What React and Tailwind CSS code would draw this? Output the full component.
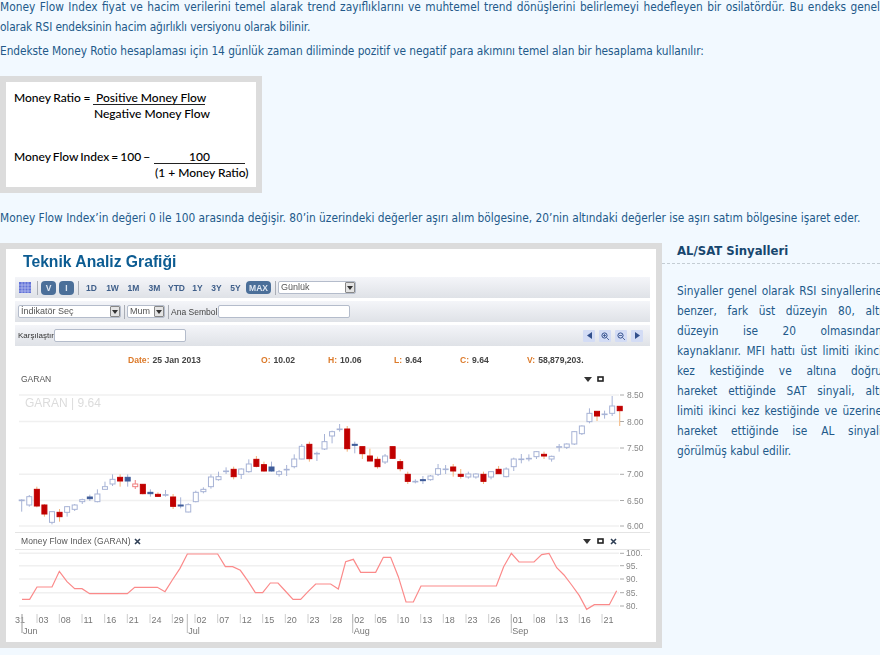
import React from "react";

const C = [
["w",298,300,302,335],["w",285,290,315,320],["r",260,268,318,322],["r",312,315,342,350],["w",335,335,367,373],["r",327,337,350,365],["w",318,320,337,350],["w",312,315,328,333],["w",296,299,305,312],["b",284,291,296,303],["w",268,282,305,307],["w",245,260,268,268],["w",223,238,252,258],["r",223,232,243,260],["b",223,232,243,260],["p",240,252,260,267],["r",253,253,281,283],["b",268,277,281,290],["r",277,283,289,290],["w",270,284,285,290],["r",282,291,319,327],["b",292,315,318,325],["w",310,314,336,337],["w",272,277,305,307],["w",262,268,275,280],["w",223,231,260,266],["w",215,230,239,242],["w",202,213,214,222],["r",200,208,230,238],["w",205,207,223,237],["w",178,192,215,218],["r",168,178,199,202],["r",185,194,213,215],["b",185,201,213,215],["w",210,215,223,230],["w",195,208,209,228],["w",163,177,200,205],["w",132,139,177,178],["r",125,133,176,185],["w",155,160,161,183],["w",102,125,147,150],["w",92,95,108,130],["w",72,87,88,95],
];
const C2 = [
["r",108,117,176,185],["b",155,163,166,190],["r",170,170,191,207],["r",176,198,213,213],["r",200,208,230,236],["w",192,198,216,222],["r",170,170,205,207],["r",207,215,236,244],["r",245,253,274,282],["w",268,274,275,280],["b",258,269,272,282],["w",255,258,269,272],["w",222,236,253,258],["w",225,237,238,252],["r",222,231,243,260],["r",237,253,259,266],["w",245,252,261,266],["w",250,252,261,266],["r",245,253,274,282],["w",243,245,261,268],["r",228,238,251,252],["w",232,237,260,262],["w",203,207,230,243],["w",192,207,208,220],["w",193,205,206,214],["w",183,185,200,207],["r",185,193,198,207],["w",197,199,207,215],["w",162,170,171,185],["w",160,162,172,177],["w",123,125,162,165],["w",106,108,131,135],["w",55,70,95,100],["r",64,64,78,93],["w",62,72,73,86],["w",18,48,70,78],["r",49,49,62,108],
];
const candles = [
  ...C.map((c) => [c[0], ...c.slice(1).map((v) => 400 + v / 3)]),
  ...C2.map((c) => [c[0], ...c.slice(1).map((v) => 390 + v / 3)]),
];
const STYLE = {
  w: { body: "#ffffff", stroke: "#a7b3d6", wick: "#a7b3d6" },
  r: { body: "#c00000", stroke: "#c00000", wick: "#f2b277" },
  b: { body: "#3f5c99", stroke: "#3f5c99", wick: "#a7b3d6" },
  p: { body: "#ffffff", stroke: "#f07f7f", wick: "#f07f7f" },
};

const mfiA = [[66,223],[89,223],[111,186],[133,186],[156,186],[178,139],[201,170],[224,191],[246,191],[269,206],[292,206],[314,206],[337,206],[359,206],[382,206],[404,187],[427,187],[450,187],[472,187],[495,200],[517,165],[540,130],[562,87],[585,87],[608,87],[630,87],[653,87],[676,125],[698,125],[721,136],[743,167],[766,203],[788,203],[811,174],[834,174],[856,198],[879,223],[902,223],[924,200],[947,177],[970,177],[992,177],[1015,192]];
const mfiB = [[47,110],[70,103],[92,142],[115,142],[137,142],[160,97],[182,97],[205,155],[228,231],[250,231],[273,183],[499,183],[521,125],[544,85],[567,111],[589,111],[612,111],[635,89],[657,85],[680,128],[702,150],[725,180],[748,212],[770,253],[793,239],[815,239],[838,239],[860,197]];
const mfi = [
  ...mfiA.map(([x, y]) => [x / 3, 525 + y / 3]),
  ...mfiB.map(([x, y]) => [330 + x / 3, 525 + y / 3]),
];

const ticks = [
  [37,"03"],[59.3,"08"],[82,"11"],[104.7,"16"],[127.3,"21"],[150,"24"],[172.3,"29"],[195,"02"],[217.7,"07"],[240.3,"12"],[262.7,"15"],[285.3,"20"],[308,"23"],[330.7,"28"],[352.7,"02"],[375.3,"05"],[398,"10"],[420.7,"13"],[443.3,"18"],[466,"23"],[488.7,"26"],[511.3,"01"],[534,"08"],[556.7,"13"],[579.3,"16"],[602,"21"],
];
const months = [[22,"Jun"],[187.3,"Jul"],[352.7,"Aug"],[511.3,"Sep"]];

const pLine = "block w-[880px] [text-align-last:justify]";
const sLine = "block w-[205px] [text-align-last:justify]";

function Select({ label, className }) {
  return (
    <div className={`flex h-[13px] items-center justify-between rounded-[2px] border border-[#b4bccb] bg-white pl-[2px] ${className}`}>
      <span className="text-[9px] leading-none text-[#555]">{label}</span>
      <span className="flex h-[11px] w-[10px] items-center justify-center rounded-[1px] border border-[#888] bg-[#e4e4e4]">
        <svg width="6" height="4" viewBox="0 0 6 4"><path d="M0 0h6L3 4z" fill="#333" /></svg>
      </span>
    </div>
  );
}
const Sep = ({ className = "" }) => <span className={`h-[14px] w-[1px] bg-[#a9adb5] ${className}`} />;
const Bar = ({ children, className = "" }) => (
  <div className={`flex h-[21px] items-center bg-gradient-to-b from-[#f4f5f9] to-[#dfe2e7] ${className}`}>{children}</div>
);
const Range = ({ children, className }) => (
  <span className={`text-center text-[8.5px] font-bold text-[#3f5f8a] ${className}`}>{children}</span>
);
const NavBtn = ({ children }) => (
  <span className="flex h-[12px] w-[12px] items-center justify-center rounded-[1px] bg-[#d3dcf5]">{children}</span>
);
const Tri = () => <svg width="8" height="5" viewBox="0 0 8 5"><path d="M0 0h8L4 5z" fill="#333" /></svg>;
const Box = () => <svg width="7" height="6" viewBox="0 0 7 6"><rect x="1" y="1" width="5" height="4" fill="none" stroke="#222" strokeWidth="1.6" /></svg>;
const Xm = () => <svg width="7" height="7" viewBox="0 0 7 7"><path d="M1 1l5 5M6 1L1 6" stroke="#2f3f55" strokeWidth="1.6" /></svg>;

const Stat = ({ k, v, className }) => (
  <span className={`absolute flex gap-[3px] ${className}`}>
    <span className="text-[#dc7a2a]">{k}</span>
    <span className="text-[#444]">{v}</span>
  </span>
);

export default function App() {
  return (
    <div
      className="h-[655px] w-[880px] overflow-hidden bg-[#f2f9ff] text-[11.8px] leading-[20px] text-[#22598a]"
      style={{ fontFamily: '"DejaVu Sans Condensed", "DejaVu Sans", sans-serif', fontStretch: "condensed" }}
    >
      <p className="-mt-[3px]">
        <span className={pLine}>Money Flow Index fiyat ve hacim verilerini temel alarak trend zayıflıklarını ve muhtemel trend dönüşlerini belirlemeyi hedefleyen bir osilatördür. Bu endeks genel</span>
        <span className="block tracking-[-0.14px]">olarak RSI endeksinin hacim ağırlıklı versiyonu olarak bilinir.</span>
      </p>
      <p className="mt-[4px] tracking-[-0.05px]">Endekste Money Rotio hesaplaması için 14 günlük zaman diliminde pozitif ve negatif para akımını temel alan bir hesaplama kullanılır:</p>

      <div className="mt-[15px] h-[117px] w-[262px] border-[6px] border-[#dcdcdc] bg-white font-['Lato',sans-serif] text-[12px] font-medium leading-[18px] text-black" style={{ fontStretch: "normal" }}>
        <div className="flex pl-[8px] pt-[8px]">
          <span className="w-[77px] whitespace-nowrap leading-[16px] [word-spacing:-0.5px]">Money Ratio =</span>
          <div className="ml-[2px] w-[112px]">
            <div className="h-[15px] whitespace-nowrap border-b border-[#222] pl-[3px] leading-[16px]">Positive Money Flow</div>
            <div className="whitespace-nowrap pl-[1px]">Negative Money Flow</div>
          </div>
        </div>
        <div className="mt-[26px] flex pl-[8px]">
          <span className="w-[136px] whitespace-nowrap leading-[16px] [word-spacing:-1px]">Money Flow Index = 100 −</span>
          <div className="ml-[4px] w-[91px]">
            <div className="h-[15px] border-b border-[#222] text-center leading-[16px]">100</div>
            <div className="whitespace-nowrap pl-[1px]">(1 + Money Ratio)</div>
          </div>
        </div>
      </div>

      <p className="mt-[15px]">Money Flow Index’in değeri 0 ile 100 arasında değişir. 80’in üzerindeki değerler aşırı alım bölgesine, 20’nin altındaki değerler ise aşırı satım bölgesine işaret eder.</p>

      <div className="mt-[15px] flex">
        <div className="h-[405px] w-[662px] shrink-0 border-[6px] border-[#dcdcdc] bg-white pl-[9px] pr-[6px] font-['Liberation_Sans',sans-serif] blur-[0.3px]" style={{ fontStretch: "normal" }}>
          <div className="flex h-[28px] items-center pb-[2px] pl-[8px] text-[15.7px] font-bold text-[#0c5c92]">Teknik Analiz Grafiği</div>

          <Bar>
            <svg className="ml-[4px]" width="12" height="11" viewBox="0 0 12 11">
              <rect width="12" height="11" fill="#6272d8" />
              <path d="M3 0v11M6 0v11M9 0v11M0 3h12M0 6h12M0 9h12" stroke="#c2c9f2" strokeWidth="0.7" />
            </svg>
            <Sep className="ml-[6px]" />
            <span className="ml-[3px] flex h-[14px] w-[15px] items-center justify-center rounded-[4px] bg-[#4b6f99] text-[8.5px] font-bold text-[#dde5f0]">V</span>
            <span className="ml-[3px] flex h-[14px] w-[15px] items-center justify-center rounded-[4px] bg-[#4b6f99] text-[8.5px] font-bold text-[#dde5f0]">I</span>
            <Sep className="ml-[4px]" />
            <Range className="ml-[6px] w-[13px]">1D</Range>
            <Range className="ml-[8px] w-[13px]">1W</Range>
            <Range className="ml-[8px] w-[13px]">1M</Range>
            <Range className="ml-[8px] w-[13px]">3M</Range>
            <Range className="ml-[7px] w-[17px]">YTD</Range>
            <Range className="ml-[7px] w-[11px]">1Y</Range>
            <Range className="ml-[8px] w-[11px]">3Y</Range>
            <Range className="ml-[8px] w-[11px]">5Y</Range>
            <span className="ml-[5px] flex h-[13px] w-[25px] items-center justify-center rounded-[4px] bg-[#4b6f99] text-[8.5px] font-bold text-[#dde5f0]">MAX</span>
            <Sep className="ml-[4px]" />
            <Select label="Günlük" className="ml-[2px] w-[78px]" />
          </Bar>

          <Bar className="mt-[3px]">
            <Select label="İndikatör Seç" className="ml-[3px] w-[103px]" />
            <Sep className="ml-[3px]" />
            <Select label="Mum" className="ml-[2px] w-[38px]" />
            <Sep className="ml-[3px]" />
            <span className="ml-[2px] w-[44px] whitespace-nowrap text-[8.5px] text-[#444]">Ana Sembol</span>
            <span className="ml-[3px] h-[13px] w-[132px] rounded-[2px] border border-[#b4bccb] bg-white" />
          </Bar>

          <Bar className="mt-[3px]">
            <span className="ml-[3px] w-[33px] whitespace-nowrap text-[8px] text-[#333]">Karşılaştır</span>
            <span className="ml-[3px] h-[13px] w-[132px] rounded-[2px] border border-[#b4bccb] bg-white" />
            <span className="ml-auto mr-[7px] flex gap-[4px]">
              <NavBtn><svg width="5" height="7" viewBox="0 0 5 7"><path d="M5 0v7L0 3.5z" fill="#33508c" /></svg></NavBtn>
              <NavBtn><svg width="8" height="8" viewBox="0 0 8 8"><circle cx="3.5" cy="3.5" r="2.6" fill="none" stroke="#33508c" /><path d="M5.5 5.5L8 8M2 3.5h3M3.5 2v3" stroke="#33508c" strokeWidth="0.8" /></svg></NavBtn>
              <NavBtn><svg width="8" height="8" viewBox="0 0 8 8"><circle cx="3.5" cy="3.5" r="2.6" fill="none" stroke="#33508c" /><path d="M5.5 5.5L8 8M2 3.5h3" stroke="#33508c" strokeWidth="0.8" /></svg></NavBtn>
              <NavBtn><svg width="5" height="7" viewBox="0 0 5 7"><path d="M0 0v7l5-3.5z" fill="#33508c" /></svg></NavBtn>
            </span>
          </Bar>

          <div className="relative h-[24px] text-[8.6px] font-bold leading-[29px]">
            <Stat k="Date:" v="25 Jan 2013" className="left-[113px] top-0" />
            <Stat k="O:" v="10.02" className="left-[246px] top-0" />
            <Stat k="H:" v="10.06" className="left-[313px] top-0" />
            <Stat k="L:" v="9.64" className="left-[379px] top-0" />
            <Stat k="C:" v="9.64" className="left-[445px] top-0" />
            <Stat k="V:" v="58,879,203." className="left-[512px] top-0" />
          </div>

          <div className="flex h-[18px] items-center pl-[6px] text-[8.5px] text-[#555]">
            <span>GARAN</span>
            <span className="ml-auto mr-[46px] flex items-center gap-[5px]"><Tri /><Box /></span>
          </div>

          <svg className="block" width="635" height="144" viewBox="15 388 635 144" style={{ fontFamily: '"Liberation Sans", sans-serif' }}>
            <text x="25" y="407" fontSize="12" fill="#dcdcdc">GARAN | 9.64</text>
            {[[395,"8.50"],[421.5,"8.00"],[448,"7.50"],[474.3,"7.00"],[500.5,"6.50"],[526,"6.00"]].map(([y, t]) => (
              <g key={t}>
                <line x1="19" x2="619" y1={y} y2={y} stroke="#f0f0f0" strokeWidth="1.5" />
                <line x1="620" x2="624" y1={y} y2={y} stroke="#aaa" />
                <text x="627" y={y + 3} fontSize="8.5" fill="#888">{t}</text>
              </g>
            ))}
            {candles.map(([k, wt, bt, bb, wb], i) => {
              const x = 21.7 + i * 7.57;
              const s = STYLE[k];
              return (
                <g key={i}>
                  <line x1={x} x2={x} y1={wt} y2={wb} stroke={s.wick} strokeWidth="1" />
                  <rect x={x - 2.5} y={bt} width="5" height={Math.max(bb - bt, 0.6)} fill={s.body} stroke={s.stroke} strokeWidth="1" />
                </g>
              );
            })}
          </svg>

          <div className="flex h-[17px] items-center border-t border-[#e4e4e4] pl-[6px] text-[8.5px] text-[#555] tracking-[0.1px]">
            <span>Money Flow Index (GARAN)</span>
            <span className="ml-[3px]"><Xm /></span>
            <span className="ml-auto mr-[33px] flex items-center gap-[6px]"><Tri /><Box /><Xm /></span>
          </div>
          <div className="h-[1px] bg-[#e6e6e6]" />

          <svg className="block" width="635" height="92" viewBox="15 550 635 92" style={{ fontFamily: '"Liberation Sans", sans-serif' }}>
            {[[553.3,"100."],[565.7,"95."],[579,"90."],[592.7,"85."],[606,"80."]].map(([y, t]) => (
              <g key={t}>
                <line x1="19" x2="619" y1={y} y2={y} stroke="#f0f0f0" strokeWidth="1.5" />
                <line x1="620" x2="624" y1={y} y2={y} stroke="#aaa" />
                <text x="626" y={y + 3} fontSize="8.5" fill="#888">{t}</text>
              </g>
            ))}
            <polyline points={mfi.map((p) => p.join(",")).join(" ")} fill="none" stroke="#fb8a8a" strokeWidth="1.2" />
            <line x1="22" x2="22" y1="614" y2="633" stroke="#bbb" />
            <text x="15" y="623" fontSize="9" fill="#777">31</text>
            {ticks.map(([x, t], i) => (
              <g key={i}>
                <line x1={x} x2={x} y1="614" y2="623" stroke="#ccc" />
                <text x={x + 1.5} y="623" fontSize="9" fill="#777">{t}</text>
              </g>
            ))}
            {months.map(([x, t]) => (
              <g key={t}>
                <line x1={x} x2={x} y1="614" y2="633" stroke="#bbb" />
                <text x={x + 1} y="634" fontSize="9" fill="#777">{t}</text>
              </g>
            ))}
          </svg>
        </div>

        <div className="min-w-0 flex-1">
          <h3 className="h-[21px] border-b border-dashed border-[#c4cdd4] pl-[15px] text-[13px] font-bold leading-[16px] text-[#17466e]">AL/SAT Sinyalleri</h3>
          <div className="w-[220px] pl-[15px] pt-[17px]">
            <span className={sLine}>Sinyaller genel olarak RSI sinyallerine</span>
            <span className={sLine}>benzer, fark üst düzeyin 80, altı</span>
            <span className={sLine}>düzeyin ise 20 olmasından</span>
            <span className={sLine}>kaynaklanır. MFI hattı üst limiti ikinci</span>
            <span className={sLine}>kez kestiğinde ve altına doğru</span>
            <span className={sLine}>hareket ettiğinde SAT sinyali, altı</span>
            <span className={sLine}>limiti ikinci kez kestiğinde ve üzerine</span>
            <span className={sLine}>hareket ettiğinde ise AL sinyali</span>
            <span className="block">görülmüş kabul edilir.</span>
          </div>
        </div>
      </div>
    </div>
  );
}
